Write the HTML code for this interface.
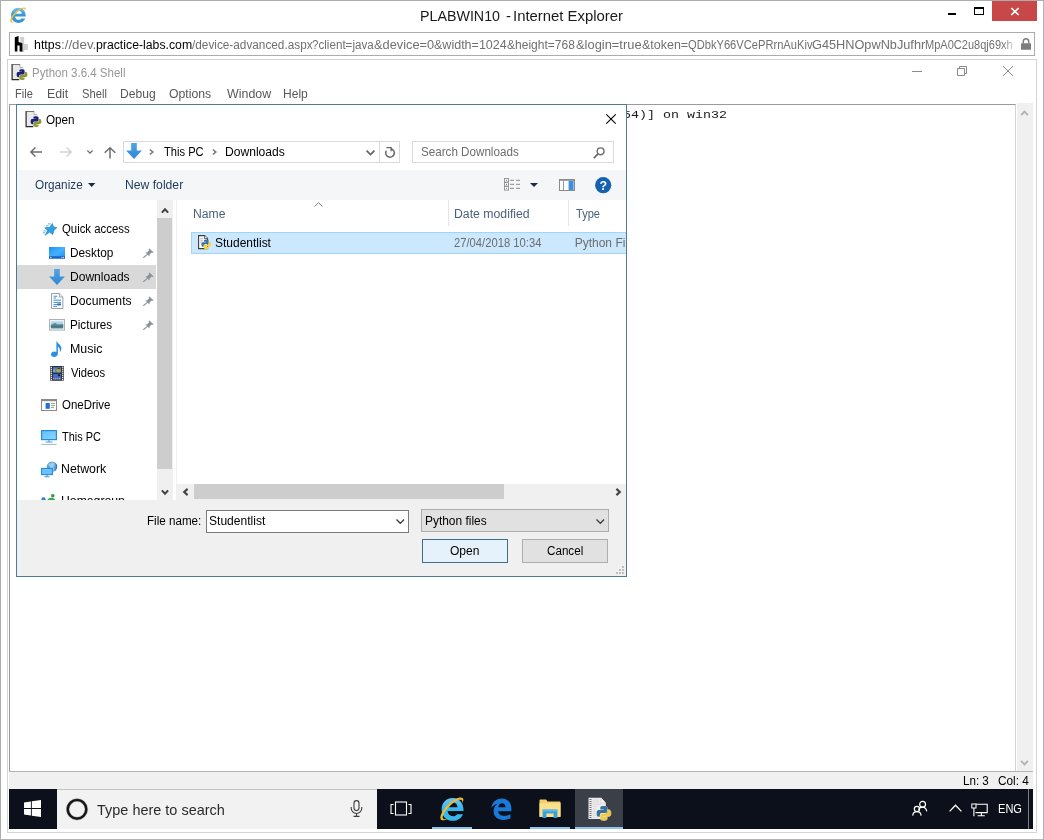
<!DOCTYPE html>
<html>
<head>
<meta charset="utf-8">
<title>PLABWIN10 - Internet Explorer</title>
<style>
*{box-sizing:border-box;margin:0;padding:0}
html,body{width:1044px;height:840px;overflow:hidden;background:#fff}
body{position:relative;font-family:"Liberation Sans",sans-serif;font-size:12px;color:#000}
.a{position:absolute}
.t{position:absolute;white-space:nowrap;line-height:1;transform-origin:0 0}
.t b{font-weight:normal;color:#000}
.mono{font-family:"Liberation Mono",monospace}
svg{position:absolute;overflow:visible}
#root{left:0;top:0;width:1044px;height:840px;will-change:transform}
#outer{left:0;top:0;width:1044px;height:840px;border:1px solid #acacac;border-right:1px solid #b4b4b4;border-bottom:1px solid #b4b4b4;background:#fff}
#closebtn{left:992px;top:1px;width:45px;height:20px;background:#c8484a}
#urlbar{left:9px;top:32px;width:1026px;height:24px;border:1px solid #acacac;background:#fff}
#inner{left:7px;top:59px;width:1030px;height:774px;border:1px solid #d4d4d4;background:#fff}
#textarea{left:9px;top:104px;width:1007px;height:668px;border:1px solid #9a9a9a;border-right:1px solid #d4d4d4;border-bottom:1px solid #b4b4b4;background:#fff}
#vscroll{left:1017px;top:103px;width:16px;height:668px;background:#f0f0f0}
#status{left:9px;top:771px;width:1024px;height:18px;background:#f0f0f0;border-top:1px solid #b4b4b4}
#taskbar{left:9px;top:789px;width:1024px;height:40px;background:#0b101a}
#search{left:57px;top:789px;width:320px;height:40px;background:#f2f2f2;border-top:1px solid #c2c2c2}
#pyactive{left:575px;top:789px;width:48px;height:40px;background:#3a3f48}
.ul{top:827px;height:2px;background:#8fc4ee}
#dlgwrap{left:16px;top:104px;width:611px;height:473px;overflow:hidden}
#dlgin{left:-16px;top:-104px;width:1044px;height:840px}
#dlgbg{left:16px;top:104px;width:611px;height:473px;border:1px solid #4d7b93;background:#fff}
#toolbar{left:17px;top:170px;width:609px;height:30px;background:#f5f6f7}
#addr{left:123px;top:141px;width:277px;height:22px;border:1px solid #d9d9d9;background:#fff}
#addrsep{left:379px;top:142px;width:1px;height:20px;background:#d9d9d9}
#sbox{left:412px;top:141px;width:202px;height:22px;border:1px solid #d9d9d9;background:#fff}
#sidesel{left:17px;top:265px;width:139px;height:24px;background:#d9d9d9}
#sscroll{left:157px;top:200px;width:16px;height:300px;background:#f0f0f0}
#sthumb{left:157px;top:218px;width:15px;height:251px;background:#cdcdcd}
#sline{left:175.6px;top:200px;width:1.4px;height:300px;background:#f0f0f0}
#hscroll{left:177px;top:484px;width:449px;height:16px;background:#f0f0f0}
#hthumb{left:194px;top:484px;width:310px;height:15px;background:#cdcdcd}
.colsep{top:200px;width:1px;height:26px;background:#e5e5e5}
#rowsel{left:191px;top:232px;width:440px;height:22px;background:#cce8ff;border:1px solid #a4d4fa}
#dlgbottom{left:17px;top:500px;width:609px;height:76px;background:#f0f0f0}
#fninput{left:206px;top:510px;width:203px;height:23px;border:1px solid #7a7a7a;background:#fff}
#ftcombo{left:421px;top:509px;width:188px;height:23px;border:1px solid #adadad;background:#e1e1e1}
#openbtn{left:422px;top:539px;width:86px;height:24px;border:1px solid #3f6f8f;background:#e5f1fb}
#cancelbtn{left:522px;top:539px;width:86px;height:24px;border:1px solid #adadad;background:#e1e1e1}
</style>
</head>
<body>
<div id="root" class="a">
<div id="outer" class="a"></div>
<div id="closebtn" class="a"></div>
<div id="urlbar" class="a"></div>
<div id="inner" class="a"></div>
<div id="textarea" class="a"></div>
<div id="vscroll" class="a"></div>
<div id="status" class="a"></div>
<div id="taskbar" class="a"></div>
<div id="search" class="a"></div>
<div id="pyactive" class="a"></div>
<div class="a ul" style="left:432px;width:40px"></div>
<div class="a ul" style="left:530px;width:40px"></div>
<div class="a ul" style="left:575px;width:48px"></div>
<div class="a" style="left:1028px;top:789px;width:1px;height:40px;background:#7b7f86"></div>
<svg style="left:10px;top:7px" width="16" height="16" viewBox="0 0 16 16" ><defs><linearGradient id="ieg16" x1="0" y1="0" x2="0" y2="1"><stop offset="0" stop-color="#6cc4f2"/><stop offset=".5" stop-color="#3596d8"/><stop offset="1" stop-color="#3596d8"/></linearGradient></defs><g transform="scale(1.0)">
<g transform="translate(8.4,8.3) scale(1.38) translate(-8.2,-8.1)"><path d="M8.3,2.6 C5.2,2.6 2.9,4.9 2.9,8.1 C2.9,11.3 5.1,13.6 8.3,13.6 C10.6,13.6 12.4,12.4 13.2,10.4 H10.4 C10,11 9.3,11.4 8.4,11.4 C6.9,11.4 5.9,10.4 5.8,8.9 H13.5 C13.6,5.3 11.6,2.6 8.3,2.6Z M5.9,7 C6.1,5.7 7,4.8 8.3,4.8 C9.6,4.8 10.5,5.7 10.6,7Z" fill="url(#ieg16)"/></g>
<g transform="translate(8,8) scale(1.1) translate(-8,-8)"><path d="M14.6,1.5 C13.2,0.3 9.2,1.6 5.2,5.8 C1.6,9.6 0.2,13.2 1.4,14.5 C2.2,15.3 4,14.8 5.6,13.7 C4,14.3 2.9,14.3 2.5,13.6 C1.9,12.5 3.4,9.6 6.2,6.8 C9.4,3.4 12.6,1.9 13.8,2.6 C14.3,2.9 14.4,3.6 14.1,4.5 C14.9,3.2 15.2,2.1 14.6,1.5Z" fill="#e6c040"/></g>
</g></svg>
<div class="a" style="left:948px;top:13px;width:8px;height:2px;background:#000"></div>
<div class="a" style="left:974px;top:7px;width:10px;height:8px;border:1px solid #000;border-top-width:2px"></div>
<svg style="left:1011px;top:8px" width="8" height="7" viewBox="0 0 8 7" ><path d="M0.3,0 L7.7,7 M7.7,0 L0.3,7" stroke="#fff" stroke-width="1.7" fill="none"/></svg>
<svg style="left:14px;top:36px" width="14" height="16" viewBox="0 0 14 16" ><path d="M6.2,1 H10.2 V16 H6.2Z M10.2,8 H13.8 V14 H10.2Z" fill="#cfcfcf"/><path d="M0.8,1.2 L4.6,0 V6 L8.4,7.2 V15.6 H5.6 V9.6 H3.4 V15.6 H0.8Z" fill="#000"/></svg>
<svg style="left:1021px;top:38px" width="10" height="12" viewBox="0 0 10 12" ><path d="M2.3,5.5 V3.6 A2.7,2.9 0 0 1 7.7,3.6 V5.5" fill="none" stroke="#7d7d7d" stroke-width="1.5"/><rect x="0" y="5.2" width="10" height="6.6" rx=".6" fill="#7d7d7d"/></svg>
<svg style="left:11px;top:64px" width="17" height="17" viewBox="0 0 17 17" ><path d="M1.2,0.3 H9 L12.3,3.6 V15.6 H1.2Z" fill="#e9e9ec"/>
<path d="M9,0.3 V3.6 H12.3" fill="#fafafa" stroke="#9a9aa0" stroke-width=".7"/>
<path d="M1.1,0 V15.6 H8.2" fill="none" stroke="#262626" stroke-width="1.2"/>
<path d="M1.2,0.5 H9" fill="none" stroke="#555" stroke-width=".8"/>
<g transform="translate(5.6,5.2) scale(1.08)"><path d="M4.9,0 C2.4,0 2.6,1.1 2.6,1.1 V2.3 H5 V2.7 H1.6 C1.6,2.7 0,2.5 0,5 C0,7.5 1.4,7.4 1.4,7.4 H2.3 V6.2 C2.3,6.2 2.2,4.8 3.7,4.8 H6.1 C6.1,4.8 7.4,4.8 7.4,3.5 V1.3 C7.4,1.3 7.6,0 4.9,0Z" fill="#1c1f7c"/><path d="M5.1,10 C7.6,10 7.4,8.9 7.4,8.9 V7.7 H5 V7.3 H8.4 C8.4,7.3 10,7.5 10,5 C10,2.5 8.6,2.6 8.6,2.6 H7.7 V3.8 C7.7,3.8 7.8,5.2 6.3,5.2 H3.9 C3.9,5.2 2.6,5.2 2.6,6.5 V8.7 C2.6,8.7 2.4,10 5.1,10Z" fill="#8b992f"/></g></svg>
<div class="a" style="left:912px;top:71px;width:10px;height:1px;background:#8a8a8a"></div>
<svg style="left:957px;top:66px" width="10" height="10" viewBox="0 0 10 10" ><path d="M0.5,2.5 H7.5 V9.5 H0.5Z M2.5,2.5 V0.5 H9.5 V7.5 H7.5" fill="none" stroke="#8a8a8a" stroke-width="1"/></svg>
<svg style="left:1003px;top:66px" width="10" height="10" viewBox="0 0 10 10" ><path d="M0,0 L10,10 M10,0 L0,10" stroke="#8a8a8a" stroke-width="1" fill="none"/></svg>
<svg style="left:1020.3px;top:109.6px" width="9" height="6" viewBox="0 0 9 6" ><path d="M1.1,5.1 L4.5,1.7 L7.9,5.1" stroke="#b2b2b2" stroke-width="1.9" fill="none"/></svg>
<svg style="left:1020.3px;top:760.3px" width="9" height="6" viewBox="0 0 9 6" ><path d="M1.1,0.9 L4.5,4.3 L7.9,0.9" stroke="#b2b2b2" stroke-width="1.9" fill="none"/></svg>
<svg style="left:24px;top:800px" width="17" height="17" viewBox="0 0 17 17" ><path d="M0,2.4 L6.9,1.4 V8.1 H0Z M7.8,1.3 L17,0 V8.1 H7.8Z M0,8.9 H6.9 V15.6 L0,14.6Z M7.8,8.9 H17 V17 L7.8,15.7Z" fill="#fff"/></svg>
<svg style="left:66px;top:798.5px" width="22" height="22" viewBox="0 0 22 22" ><circle cx="11.05" cy="10.35" r="9.3" fill="none" stroke="#141414" stroke-width="2.6"/><circle cx="11.05" cy="10.35" r="10.7" fill="none" stroke="#777" stroke-width=".7" opacity=".55"/><circle cx="11.05" cy="10.35" r="7.9" fill="none" stroke="#777" stroke-width=".6" opacity=".5"/></svg>
<svg style="left:350px;top:800px" width="13" height="17" viewBox="0 0 13 17" ><rect x="4" y="0.6" width="5" height="10" rx="2.5" fill="none" stroke="#3c3c3c" stroke-width="1.1"/><path d="M1.2,7 V8.2 A5.3,5.3 0 0 0 11.8,8.2 V7 M6.5,13.5 V16.4 M3.5,16.4 H9.5" fill="none" stroke="#3c3c3c" stroke-width="1.1"/></svg>
<svg style="left:390px;top:801px" width="22" height="15" viewBox="0 0 22 15" ><rect x="5.5" y="1" width="11" height="13" fill="none" stroke="#fff" stroke-width="1.1"/><path d="M3.6,3.5 H1 V12.5 H3.6 M18.4,3.5 H21 V12.5 H18.4" fill="none" stroke="#fff" stroke-width="1.1"/></svg>
<svg style="left:440px;top:796.5px" width="24" height="24" viewBox="0 0 24 24" ><defs><linearGradient id="ieg24" x1="0" y1="0" x2="0" y2="1"><stop offset="0" stop-color="#6cc4f2"/><stop offset=".5" stop-color="#38b6ee"/><stop offset="1" stop-color="#38b6ee"/></linearGradient></defs><g transform="scale(1.5)">
<g transform="translate(8.4,8.3) scale(1.38) translate(-8.2,-8.1)"><path d="M8.3,2.6 C5.2,2.6 2.9,4.9 2.9,8.1 C2.9,11.3 5.1,13.6 8.3,13.6 C10.6,13.6 12.4,12.4 13.2,10.4 H10.4 C10,11 9.3,11.4 8.4,11.4 C6.9,11.4 5.9,10.4 5.8,8.9 H13.5 C13.6,5.3 11.6,2.6 8.3,2.6Z M5.9,7 C6.1,5.7 7,4.8 8.3,4.8 C9.6,4.8 10.5,5.7 10.6,7Z" fill="url(#ieg24)"/></g>
<g transform="translate(8,8) scale(1.1) translate(-8,-8)"><path d="M14.6,1.5 C13.2,0.3 9.2,1.6 5.2,5.8 C1.6,9.6 0.2,13.2 1.4,14.5 C2.2,15.3 4,14.8 5.6,13.7 C4,14.3 2.9,14.3 2.5,13.6 C1.9,12.5 3.4,9.6 6.2,6.8 C9.4,3.4 12.6,1.9 13.8,2.6 C14.3,2.9 14.4,3.6 14.1,4.5 C14.9,3.2 15.2,2.1 14.6,1.5Z" fill="#e8bd3a"/></g>
</g></svg>
<svg style="left:491px;top:798px" width="21" height="22" viewBox="0 0 21 22" ><path d="M0.3,10.2 C0.8,4.2 5.2,0.4 10.8,0.4 C16.6,0.4 20.6,4.6 20.4,11 V13.2 H7.2 C7.4,16.2 10,17.8 13.2,17.8 C15.6,17.8 17.6,17.2 19.4,16.2 V20.4 C17.4,21.4 15.2,21.9 12.6,21.9 C6.4,21.9 2.6,18.4 2.6,13 C2.6,9.8 4.2,7.2 6.8,5.8 C4,6.2 1.6,7.8 0.3,10.2Z M7.4,9.2 H14.4 C14.4,6.8 13.2,5.2 10.9,5.2 C8.8,5.2 7.6,6.9 7.4,9.2Z" fill="#1a7ad9"/></svg>
<svg style="left:539px;top:799px" width="22" height="20" viewBox="0 0 22 20" ><path d="M0.5,1.5 Q0.5,0.6 1.4,0.6 H7 L8.6,2.4 H20.6 Q21.5,2.4 21.5,3.3 V17.5 H0.5Z" fill="#f4cf6a"/><path d="M0.5,4.2 H21.5 V18 H0.5Z" fill="#fbe08c"/><path d="M3.6,10.6 H18.4 V19 H14.6 V14.4 H7.4 V19 H3.6Z" fill="#38a1dc"/><path d="M3.6,10.6 H18.4 V12.4 H3.6Z" fill="#5cbcee"/></svg>
<svg style="left:587.5px;top:797px" width="24" height="24" viewBox="0 0 24 24" ><path d="M0.5,0.7 H13 L17.8,6 V22.1 H0.5Z" fill="#ededee"/><path d="M13,0.7 V6 H17.8" fill="#fbfbfb" stroke="#c4c4c8" stroke-width=".6"/>
<rect x="1.5" y="2" width="2" height="1" fill="#707074"/><rect x="1.5" y="4" width="2" height="1" fill="#707074"/><rect x="1.5" y="6" width="2" height="1" fill="#707074"/><rect x="1.5" y="8" width="2" height="1" fill="#707074"/><rect x="1.5" y="10" width="2" height="1" fill="#707074"/><rect x="1.5" y="12" width="2" height="1" fill="#707074"/><rect x="1.5" y="14" width="2" height="1" fill="#707074"/><rect x="1.5" y="16" width="2" height="1" fill="#707074"/><rect x="1.5" y="18" width="2" height="1" fill="#707074"/><rect x="1.5" y="20" width="2" height="1" fill="#707074"/>
<path d="M4.6,3 H11 M4.6,5.2 H11 M4.6,7.4 H13 M4.6,9.6 H9 M4.6,11.8 H8 M4.6,14 H8 M4.6,16.2 H8 M4.6,18.4 H9 M4.6,20.4 H10" stroke="#d4d4d8" stroke-width=".8"/>
<g transform="translate(8.6,9.1) scale(1.43)" stroke="#f4f4ec" stroke-width=".45" paint-order="stroke"><path d="M4.9,0 C2.4,0 2.6,1.1 2.6,1.1 V2.3 H5 V2.7 H1.6 C1.6,2.7 0,2.5 0,5 C0,7.5 1.4,7.4 1.4,7.4 H2.3 V6.2 C2.3,6.2 2.2,4.8 3.7,4.8 H6.1 C6.1,4.8 7.4,4.8 7.4,3.5 V1.3 C7.4,1.3 7.6,0 4.9,0Z" fill="#35709f"/><path d="M5.1,10 C7.6,10 7.4,8.9 7.4,8.9 V7.7 H5 V7.3 H8.4 C8.4,7.3 10,7.5 10,5 C10,2.5 8.6,2.6 8.6,2.6 H7.7 V3.8 C7.7,3.8 7.8,5.2 6.3,5.2 H3.9 C3.9,5.2 2.6,5.2 2.6,6.5 V8.7 C2.6,8.7 2.4,10 5.1,10Z" fill="#f4cb45"/></g></svg>
<svg style="left:912px;top:800px" width="16" height="16" viewBox="0 0 16 16" ><circle cx="10.6" cy="4.2" r="2.9" fill="none" stroke="#fff" stroke-width="1.2"/><path d="M6.6,10 C7.4,7.8 9,7.2 10.6,7.2 C12.6,7.2 14.2,8.4 14.8,11.4" fill="none" stroke="#fff" stroke-width="1.2"/><circle cx="4.9" cy="9" r="2.6" fill="none" stroke="#fff" stroke-width="1.2"/><path d="M0.7,15.6 C1,12.6 2.8,11.7 4.9,11.7 C7,11.7 8.8,12.6 9.1,15.6" fill="none" stroke="#fff" stroke-width="1.2"/></svg>
<svg style="left:949px;top:804px" width="13" height="8" viewBox="0 0 13 8" ><path d="M0.6,7.4 L6.5,1.2 L12.4,7.4" fill="none" stroke="#fff" stroke-width="1.3"/></svg>
<svg style="left:971px;top:802.5px" width="18" height="14" viewBox="0 0 18 14" ><path d="M4.5,1.2 H16.2 V9.6 H4.5" fill="none" stroke="#fff" stroke-width="1.1"/><path d="M10.4,9.6 V12.6 M6.6,12.7 H13.8" stroke="#fff" stroke-width="1.1" fill="none"/><rect x="0.8" y="1" width="4.2" height="4" fill="#0b101a" stroke="#fff" stroke-width="1"/><path d="M2.9,5 V13.2" stroke="#fff" stroke-width="1.1"/></svg>
<div class="t" style="left:419.82px;top:8.30px;font-size:15px;color:#1a1a1a;transform:scaleX(0.9500);">PLABWIN10</div>
<div class="t" style="left:505.98px;top:8.30px;font-size:15px;color:#1a1a1a;">-</div>
<div class="t" style="left:512.82px;top:8.30px;font-size:15px;color:#1a1a1a;transform:scaleX(0.9918);">Internet Explorer</div>
<div class="t" style="left:33.66px;top:39.42px;font-size:12.5px;color:#000;transform:scaleX(0.9935);">https</div>
<div class="t" style="left:60.82px;top:39.42px;font-size:12.5px;color:#707070;transform:scaleX(1.0639);">://dev.</div>
<div class="t" style="left:95.82px;top:39.42px;font-size:12.5px;color:#000;transform:scaleX(0.9813);">practice-labs.com</div>
<div class="t" style="left:191.51px;top:39.42px;font-size:12.5px;color:#707070;transform:scaleX(0.9432);">/device-advanced.aspx</div>
<div class="t" style="left:312.40px;top:39.42px;font-size:12.5px;color:#707070;transform:scaleX(0.9302);">?client=java</div>
<div class="t" style="left:373.72px;top:39.42px;font-size:12.5px;color:#707070;transform:scaleX(1.0233);">&amp;device=0</div>
<div class="t" style="left:433.56px;top:39.42px;font-size:12.5px;color:#707070;transform:scaleX(1.0016);">&amp;width=1024</div>
<div class="t" style="left:507.35px;top:39.42px;font-size:12.5px;color:#707070;transform:scaleX(0.9615);">&amp;height=768</div>
<div class="t" style="left:575.72px;top:39.42px;font-size:12.5px;color:#707070;transform:scaleX(1.0314);">&amp;login=true</div>
<div class="t" style="left:641.72px;top:39.42px;font-size:12.5px;color:#707070;transform:scaleX(0.9982);">&amp;token=</div>
<div class="t" style="left:688.08px;top:39.42px;font-size:12.5px;color:#707070;transform:scaleX(0.8912);">QDbkY66VCePRrnAuKiv</div>
<div class="t" style="left:812.08px;top:39.42px;font-size:12.5px;color:#707070;transform:scaleX(1.0187);">G45HNOpwNbJufhr</div>
<div class="t" style="left:925.08px;top:39.42px;font-size:12.5px;color:#707070;transform:scaleX(0.8827);">MpA0C2u8qj69xh</div>
<div class="t" style="left:32.03px;top:66.84px;font-size:12px;color:#979797;transform:scaleX(0.9596);">Python 3.6.4 Shell</div>
<div class="t" style="left:15.08px;top:87.84px;font-size:12px;color:#585858;transform:scaleX(0.9200);">File</div>
<div class="t" style="left:47.08px;top:87.84px;font-size:12px;color:#585858;transform:scaleX(1.0272);">Edit</div>
<div class="t" style="left:81.66px;top:87.84px;font-size:12px;color:#585858;transform:scaleX(0.9317);">Shell</div>
<div class="t" style="left:120.29px;top:87.84px;font-size:12px;color:#585858;transform:scaleX(1.0080);">Debug</div>
<div class="t" style="left:169.29px;top:87.84px;font-size:12px;color:#585858;transform:scaleX(1.0204);">Options</div>
<div class="t" style="left:226.51px;top:87.84px;font-size:12px;color:#585858;transform:scaleX(1.0345);">Window</div>
<div class="t" style="left:283.45px;top:87.84px;font-size:12px;color:#585858;transform:scaleX(1.0044);">Help</div>
<div class="t mono" style="left:623.30px;top:110.10px;font-size:11.7px;color:#1a1a1a;transform:scaleX(1.14);">54)] on win32</div>
<div class="t" style="left:962.61px;top:774.84px;font-size:12px;color:#000;transform:scaleX(0.9679);">Ln: 3</div>
<div class="t" style="left:997.82px;top:774.84px;font-size:12px;color:#000;transform:scaleX(0.9852);">Col: 4</div>
<div class="t" style="left:96.77px;top:802.30px;font-size:15px;color:#2b2b2b;transform:scaleX(0.9643);">Type here to search</div>
<div class="t" style="left:997.82px;top:802.84px;font-size:12px;color:#fff;transform:scaleX(0.9215);">ENG</div>
<div class="a" style="left:1002px;top:35px;width:15px;height:19px;background:linear-gradient(to right,rgba(255,255,255,0),rgba(255,255,255,.95))"></div>
<div id="dlgwrap" class="a"><div id="dlgin" class="a">
<div id="dlgbg" class="a"></div>
<div id="toolbar" class="a"></div>
<div id="addr" class="a"></div>
<div id="addrsep" class="a"></div>
<div id="sbox" class="a"></div>
<div id="sidesel" class="a"></div>
<div id="sscroll" class="a"></div>
<div id="sthumb" class="a"></div>
<div id="sline" class="a"></div>
<div id="hscroll" class="a"></div>
<div id="hthumb" class="a"></div>
<div class="a colsep" style="left:448px"></div>
<div class="a colsep" style="left:568px"></div>
<div id="rowsel" class="a"></div>
<svg style="left:25px;top:111px" width="17" height="17" viewBox="0 0 17 17" ><path d="M1.2,0.3 H9 L12.3,3.6 V15.6 H1.2Z" fill="#e9e9ec"/>
<path d="M9,0.3 V3.6 H12.3" fill="#fafafa" stroke="#9a9aa0" stroke-width=".7"/>
<path d="M1.1,0 V15.6 H8.2" fill="none" stroke="#262626" stroke-width="1.2"/>
<path d="M1.2,0.5 H9" fill="none" stroke="#555" stroke-width=".8"/>
<g transform="translate(5.6,5.2) scale(1.08)"><path d="M4.9,0 C2.4,0 2.6,1.1 2.6,1.1 V2.3 H5 V2.7 H1.6 C1.6,2.7 0,2.5 0,5 C0,7.5 1.4,7.4 1.4,7.4 H2.3 V6.2 C2.3,6.2 2.2,4.8 3.7,4.8 H6.1 C6.1,4.8 7.4,4.8 7.4,3.5 V1.3 C7.4,1.3 7.6,0 4.9,0Z" fill="#1c1f7c"/><path d="M5.1,10 C7.6,10 7.4,8.9 7.4,8.9 V7.7 H5 V7.3 H8.4 C8.4,7.3 10,7.5 10,5 C10,2.5 8.6,2.6 8.6,2.6 H7.7 V3.8 C7.7,3.8 7.8,5.2 6.3,5.2 H3.9 C3.9,5.2 2.6,5.2 2.6,6.5 V8.7 C2.6,8.7 2.4,10 5.1,10Z" fill="#8b992f"/></g></svg>
<svg style="left:606px;top:114px" width="10" height="10" viewBox="0 0 10 10" ><path d="M0.3,0.3 L9.7,9.7 M9.7,0.3 L0.3,9.7" stroke="#000" stroke-width="1.1" fill="none"/></svg>
<svg style="left:30px;top:147px" width="12" height="10" viewBox="0 0 12 10" ><path d="M5.4,0.5 L0.9,5 L5.4,9.5 M0.9,5 H12" fill="none" stroke="#6e6e6e" stroke-width="1.5"/></svg>
<svg style="left:59.5px;top:147px" width="12" height="10" viewBox="0 0 12 10" ><path d="M6.6,0.5 L11.1,5 L6.6,9.5 M11.1,5 H0" fill="none" stroke="#d2d2d2" stroke-width="1.5"/></svg>
<svg style="left:86.5px;top:149.5px" width="6" height="4" viewBox="0 0 6 4" ><path d="M0.4,0.5 L3,3.1 L5.6,0.5" fill="none" stroke="#6e6e6e" stroke-width="1.3"/></svg>
<svg style="left:104px;top:146.5px" width="12" height="12" viewBox="0 0 12 12" ><path d="M0.7,5.8 L6,0.8 L11.3,5.8 M6,0.8 V11.5" fill="none" stroke="#6e6e6e" stroke-width="1.5"/></svg>
<svg style="left:126px;top:143px" width="16" height="16" viewBox="0 0 16 16" ><defs><linearGradient id="dg" x1="0" y1="0" x2="0" y2="1"><stop offset="0" stop-color="#4ea5e8"/><stop offset="1" stop-color="#2f86d4"/></linearGradient></defs><path d="M5.2,0 H10.8 V7.4 H15.9 L8,15.9 L0.1,7.4 H5.2Z" fill="url(#dg)"/></svg>
<svg style="left:149px;top:149px" width="5" height="6" viewBox="0 0 5 6" ><path d="M0.8,0.5 L3.8,3 L0.8,5.5" fill="none" stroke="#777" stroke-width="1.6"/></svg>
<svg style="left:212px;top:149px" width="5" height="6" viewBox="0 0 5 6" ><path d="M0.8,0.5 L3.8,3 L0.8,5.5" fill="none" stroke="#777" stroke-width="1.6"/></svg>
<svg style="left:365.5px;top:150px" width="9" height="6" viewBox="0 0 9 6" ><path d="M0.6,0.7 L4.5,4.6 L8.4,0.7" fill="none" stroke="#666" stroke-width="1.7"/></svg>
<svg style="left:384px;top:146px" width="12" height="12" viewBox="0 0 12 12" ><path d="M7.1,2.75 A4.3,4.3 0 1 1 2.28,4.75" fill="none" stroke="#6a6a6a" stroke-width="1.5"/><path d="M2.4,1.6 H7.1 V5.2" fill="none" stroke="#6a6a6a" stroke-width="1.4"/></svg>
<svg style="left:593px;top:147px" width="12" height="12" viewBox="0 0 12 12" ><circle cx="7.6" cy="4.3" r="3.4" fill="none" stroke="#6a6a6a" stroke-width="1.4"/><path d="M5.1,6.8 L0.8,11.1" stroke="#6a6a6a" stroke-width="1.8"/></svg>
<svg style="left:88.2px;top:183px" width="7.4" height="4" viewBox="0 0 7.4 4" ><path d="M0,0 H7.4 L3.7,4Z" fill="#1e2a44"/></svg>
<svg style="left:529.5px;top:183px" width="8" height="4" viewBox="0 0 8 4" ><path d="M0,0 H8 L4,4Z" fill="#1e2a44"/></svg>
<svg style="left:504px;top:178.3px" width="17" height="13" viewBox="0 0 17 13" ><rect x="0.5" y="0.5" width="4" height="3.6" fill="#fff" stroke="#8f8f8f" stroke-width=".9"/><rect x="2" y="1.8" width="1" height="1" fill="#777"/><path d="M6,2.3 H10 M12,2.3 H16" stroke="#8a8a8a" stroke-width="1"/><rect x="0.5" y="4.5" width="4" height="3.6" fill="#fff" stroke="#8f8f8f" stroke-width=".9"/><rect x="2" y="5.8" width="1" height="1" fill="#777"/><path d="M6,6.3 H10 M12,6.3 H16" stroke="#8a8a8a" stroke-width="1"/><rect x="0.5" y="8.5" width="4" height="3.6" fill="#fff" stroke="#8f8f8f" stroke-width=".9"/><rect x="2" y="9.8" width="1" height="1" fill="#777"/><path d="M6,10.3 H10 M12,10.3 H16" stroke="#8a8a8a" stroke-width="1"/></svg>
<svg style="left:559px;top:179px" width="16" height="12" viewBox="0 0 16 12" ><rect x="0.5" y="0.5" width="15" height="11" fill="#fff" stroke="#8c8c8c"/><path d="M0,1 H16" stroke="#8c8c8c" stroke-width="1.6"/><path d="M4.5,1.5 V11" stroke="#9a9a9a" stroke-width="1"/><rect x="9.6" y="1.8" width="5" height="9.2" fill="#3f90dc"/></svg>
<svg style="left:595px;top:176.7px" width="16.4" height="16.4" viewBox="0 0 16.4 16.4" ><circle cx="8.2" cy="8.2" r="8.1" fill="#1762b0"/><text x="8.2" y="12.6" text-anchor="middle" font-family="Liberation Sans,sans-serif" font-weight="bold" font-size="12.5" fill="#fff">?</text></svg>
<svg style="left:314px;top:201.5px" width="9" height="5" viewBox="0 0 9 5" ><path d="M0.5,4.5 L4.5,0.7 L8.5,4.5" fill="none" stroke="#7a7a7a" stroke-width="1"/></svg>
<svg style="left:160.5px;top:206.5px" width="8" height="7" viewBox="0 0 8 7" ><path d="M0.9,5.6 L4,2.2 L7.1,5.6" fill="none" stroke="#444" stroke-width="2.1"/></svg>
<svg style="left:160.5px;top:488.5px" width="8" height="7" viewBox="0 0 8 7" ><path d="M0.9,1.4 L4,4.8 L7.1,1.4" fill="none" stroke="#444" stroke-width="2.1"/></svg>
<svg style="left:181.5px;top:487.5px" width="7" height="8" viewBox="0 0 7 8" ><path d="M5.6,0.9 L2.2,4 L5.6,7.1" fill="none" stroke="#444" stroke-width="2.1"/></svg>
<svg style="left:614.5px;top:487.5px" width="7" height="8" viewBox="0 0 7 8" ><path d="M1.4,0.9 L4.8,4 L1.4,7.1" fill="none" stroke="#444" stroke-width="2.1"/></svg>
<svg style="left:142.8px;top:248.4px" width="11" height="10" viewBox="0 0 11 10" ><path d="M6.2,0.3 L10.6,4.6 L9.4,5 L8.6,4.6 L6.6,6.6 L6.4,8.4 L2.4,4.4 L4.2,4.2 L6.2,2.2 L5.8,1.4Z" fill="#8a9299"/><path d="M4.4,6.4 L0.3,9.7" stroke="#8a9299" stroke-width="1.1"/></svg>
<svg style="left:142.8px;top:272.4px" width="11" height="10" viewBox="0 0 11 10" ><path d="M6.2,0.3 L10.6,4.6 L9.4,5 L8.6,4.6 L6.6,6.6 L6.4,8.4 L2.4,4.4 L4.2,4.2 L6.2,2.2 L5.8,1.4Z" fill="#8a9299"/><path d="M4.4,6.4 L0.3,9.7" stroke="#8a9299" stroke-width="1.1"/></svg>
<svg style="left:142.8px;top:296.4px" width="11" height="10" viewBox="0 0 11 10" ><path d="M6.2,0.3 L10.6,4.6 L9.4,5 L8.6,4.6 L6.6,6.6 L6.4,8.4 L2.4,4.4 L4.2,4.2 L6.2,2.2 L5.8,1.4Z" fill="#8a9299"/><path d="M4.4,6.4 L0.3,9.7" stroke="#8a9299" stroke-width="1.1"/></svg>
<svg style="left:142.8px;top:320.4px" width="11" height="10" viewBox="0 0 11 10" ><path d="M6.2,0.3 L10.6,4.6 L9.4,5 L8.6,4.6 L6.6,6.6 L6.4,8.4 L2.4,4.4 L4.2,4.2 L6.2,2.2 L5.8,1.4Z" fill="#8a9299"/><path d="M4.4,6.4 L0.3,9.7" stroke="#8a9299" stroke-width="1.1"/></svg>
<svg style="left:43px;top:222.5px" width="15" height="13" viewBox="0 0 15 13" ><path d="M9.4,0.4 L10.6,4 L13.9,4.7 L11,7.2 L9.8,11.5 L6.5,9.2 L2.1,12.3 L4.5,7.5 L1.8,4.8 L6.6,4.3Z" fill="#2f9fe4" stroke="#2b82c0" stroke-width=".6"/><path d="M4.8,0.9 H7.6 M2.8,2.9 H5.4 M0.4,7.9 H2.8 M0,9.8 H2" stroke="#5ab0e8" stroke-width="1"/></svg>
<svg style="left:49px;top:247.2px" width="16" height="11.6" viewBox="0 0 16 11.6" ><defs><linearGradient id="dk" x1="0" y1="0" x2="1" y2="1"><stop offset="0" stop-color="#1e8ff0"/><stop offset=".5" stop-color="#46b1ff"/><stop offset="1" stop-color="#1e8ff0"/></linearGradient></defs><rect x="0" y="0" width="16" height="11.6" fill="url(#dk)"/><rect x="0" y="9.2" width="16" height="2.4" fill="#1967c4"/><rect x="1.2" y="9.9" width="1.2" height="1" fill="#d7ecff"/><rect x="12.4" y="9.9" width="1" height="1" fill="#d7ecff"/><rect x="14" y="9.9" width="1" height="1" fill="#d7ecff"/></svg>
<svg style="left:49px;top:269.4px" width="16" height="16" viewBox="0 0 16 16" ><defs><linearGradient id="dg" x1="0" y1="0" x2="0" y2="1"><stop offset="0" stop-color="#4ea5e8"/><stop offset="1" stop-color="#2f86d4"/></linearGradient></defs><path d="M5.2,0 H10.8 V7.4 H15.9 L8,15.9 L0.1,7.4 H5.2Z" fill="url(#dg)"/></svg>
<svg style="left:51px;top:293px" width="12.4" height="16" viewBox="0 0 12.4 16" ><path d="M0.5,0.5 H8.4 L11.9,4 V15.5 H0.5Z" fill="#fff" stroke="#8d959e" stroke-width=".9"/><path d="M8.4,0.5 V4 H11.9" fill="#eef2f6" stroke="#8d959e" stroke-width=".8"/><path d="M2.6,3.2 H6.4 M2.6,5 H5 M2.4,7.2 H10 M2.4,9.4 H10 M2.4,11.6 H10 M2.4,13.4 H6" stroke="#3b8fd6" stroke-width="1"/><path d="M6.4,10.4 H10 V12.4 H6.4Z" fill="#2f6fb4"/></svg>
<svg style="left:49px;top:319.3px" width="16" height="11.6" viewBox="0 0 16 11.6" ><defs><linearGradient id="pc" x1="0" y1="0" x2="0" y2="1"><stop offset="0" stop-color="#cfe8f8"/><stop offset=".45" stop-color="#9cc6dc"/><stop offset=".55" stop-color="#4f7f8c"/><stop offset=".8" stop-color="#3d6b78"/><stop offset="1" stop-color="#a9c4cf"/></linearGradient></defs><rect x="0.5" y="0.5" width="15" height="10.6" fill="#f4f6f8" stroke="#aab2ba"/><rect x="1.8" y="1.8" width="12.4" height="8" fill="url(#pc)"/><path d="M1.8,6.2 L6,3.8 L9,5.8 L14.2,5 V7.6 H1.8Z" fill="#54808c" opacity=".8"/></svg>
<svg style="left:51px;top:341px" width="11.5" height="16" viewBox="0 0 11.5 16" ><path d="M5.6,0 C6.4,2.4 10.6,4 10.4,7.6 C10.3,9.2 9.6,10.6 8.6,11.4 C9.4,9.6 9.2,7.4 6.9,5.6 V12.6 C6.9,14.6 5.2,16 3.2,16 C1.4,16 0,15 0,13.5 C0,11.8 1.7,10.6 3.5,10.6 C4.2,10.6 4.9,10.8 5.4,11.1 V0Z" fill="#2b90e2"/></svg>
<svg style="left:50px;top:366px" width="14" height="14.7" viewBox="0 0 14 14.7" ><rect x="0" y="0" width="14" height="14.7" fill="#4c4c50"/><rect x="2.4" y="0.3" width="9.2" height="14.1" fill="#17233c"/><rect x="3" y="1.2" width="8" height="5.6" fill="#5a7ab6"/><rect x="3" y="7.8" width="8" height="5.8" fill="#4a68bc"/><ellipse cx="8.6" cy="4.4" rx="2.2" ry="1.9" fill="#a9ad35"/><rect x="7.6" y="2" width="2.4" height="1.2" fill="#4a3a2a"/><rect x="3.2" y="3.4" width="2" height="2.6" fill="#a8b0d8" opacity=".7"/><rect x="8" y="8.4" width="2" height="1.8" fill="#151c30"/><path d="M3.2,12.8 H10.8" stroke="#d6d6a0" stroke-width="1" stroke-dasharray="1.2 .8"/><rect x="0.7" y="0.8" width="1.2" height="1.1" fill="#fff"/><rect x="12.1" y="0.8" width="1.2" height="1.1" fill="#fff"/><rect x="0.7" y="2.8" width="1.2" height="1.1" fill="#fff"/><rect x="12.1" y="2.8" width="1.2" height="1.1" fill="#fff"/><rect x="0.7" y="4.8" width="1.2" height="1.1" fill="#fff"/><rect x="12.1" y="4.8" width="1.2" height="1.1" fill="#fff"/><rect x="0.7" y="6.8" width="1.2" height="1.1" fill="#fff"/><rect x="12.1" y="6.8" width="1.2" height="1.1" fill="#fff"/><rect x="0.7" y="8.8" width="1.2" height="1.1" fill="#fff"/><rect x="12.1" y="8.8" width="1.2" height="1.1" fill="#fff"/><rect x="0.7" y="10.8" width="1.2" height="1.1" fill="#fff"/><rect x="12.1" y="10.8" width="1.2" height="1.1" fill="#fff"/><rect x="0.7" y="12.8" width="1.2" height="1.1" fill="#fff"/><rect x="12.1" y="12.8" width="1.2" height="1.1" fill="#fff"/></svg>
<svg style="left:41px;top:399px" width="16" height="12" viewBox="0 0 16 12" ><rect x="0.5" y="0.5" width="15" height="11" fill="#fff" stroke="#8a8a8a"/><path d="M0,1.2 H16" stroke="#8a8a8a" stroke-width="2"/><rect x="4.6" y="4" width="4.2" height="5.8" fill="#1e6fcf"/><path d="M10,4.6 H14 M10,6.6 H14 M10,8.6 H13" stroke="#9a9a9a" stroke-width="1"/></svg>
<svg style="left:41px;top:430px" width="16" height="15" viewBox="0 0 16 15" ><defs><linearGradient id="tp" x1="0" y1="0" x2="1" y2="1"><stop offset="0" stop-color="#5cc0ff"/><stop offset="1" stop-color="#8fd6ff"/></linearGradient></defs><rect x="0.6" y="0.6" width="14.8" height="9" fill="url(#tp)" stroke="#2a8ad4" stroke-width="1.2"/><path d="M8,10 V11.8 M4.6,12 H11.4" stroke="#4a9ad8" stroke-width="1.1"/><path d="M0.4,14.4 H15.6" stroke="#aab6c0" stroke-width="1"/></svg>
<svg style="left:41px;top:461px" width="16" height="17" viewBox="0 0 16 17" ><circle cx="11" cy="5.6" r="5.2" fill="#5aa0d8"/><path d="M7.4,2.2 C9,3 10,2 11.4,1.2 C13.4,1.6 14.2,3.6 13,5 C12,6 13.6,7.6 12.6,9.6 C10,10.4 8.6,8 9.4,6 C8,5.4 7,4 7.4,2.2Z" fill="#a9d3ef" opacity=".85"/><path d="M14.4,1.8 A5.2,5.2 0 0 1 13.4,10.2 C15.4,8 15.4,4 14.4,1.8Z" fill="#2e6ea8"/><rect x="0.6" y="7.4" width="10.8" height="6.2" fill="#69c3ff" stroke="#2a8ad4" stroke-width="1.1"/><path d="M6,14 V15.4 M3.4,15.8 H8.6" stroke="#4a9ad8" stroke-width="1.1"/></svg>
<svg style="left:41px;top:493.5px" width="16" height="14" viewBox="0 0 16 14" ><circle cx="2.5" cy="5.4" r="2.1" fill="#2a7fd0"/><path d="M0,12 C0,8.4 5,8.4 5,12Z" fill="#2a7fd0"/><circle cx="11.8" cy="1.7" r="1.8" fill="#2f9a48"/><path d="M6,8 C6,2.4 14.6,2.4 14.6,8 V12 H6Z" fill="#3aa64a"/></svg>
<svg style="left:198px;top:235px" width="13" height="15" viewBox="0 0 13 15" ><path d="M0.6,0.6 H6.6 L9.6,3.6 V13.6 H0.6Z" fill="#fff" stroke="#3a3a3a" stroke-width="1.1"/><path d="M6.6,0.6 V3.6 H9.6" fill="#f1f1f1" stroke="#3a3a3a" stroke-width=".8"/><path d="M2.2,3.4 H5.4 M2.2,5.2 H5" stroke="#b0b0b0" stroke-width=".8"/><path d="M2.2,7 H4.6" stroke="#d88" stroke-width=".8"/><g transform="translate(3.4,4.6) scale(0.96)"><path d="M4.9,0 C2.4,0 2.6,1.1 2.6,1.1 V2.3 H5 V2.7 H1.6 C1.6,2.7 0,2.5 0,5 C0,7.5 1.4,7.4 1.4,7.4 H2.3 V6.2 C2.3,6.2 2.2,4.8 3.7,4.8 H6.1 C6.1,4.8 7.4,4.8 7.4,3.5 V1.3 C7.4,1.3 7.6,0 4.9,0Z" fill="#3572a5"/><path d="M5.1,10 C7.6,10 7.4,8.9 7.4,8.9 V7.7 H5 V7.3 H8.4 C8.4,7.3 10,7.5 10,5 C10,2.5 8.6,2.6 8.6,2.6 H7.7 V3.8 C7.7,3.8 7.8,5.2 6.3,5.2 H3.9 C3.9,5.2 2.6,5.2 2.6,6.5 V8.7 C2.6,8.7 2.4,10 5.1,10Z" fill="#ffd43b"/></g></svg>
<div class="t" style="left:46.03px;top:113.84px;font-size:12px;color:#000;transform:scaleX(0.9746);">Open</div>
<div class="t" style="left:163.72px;top:145.84px;font-size:12px;color:#000;transform:scaleX(0.9290);">This PC</div>
<div class="t" style="left:225.24px;top:145.84px;font-size:12px;color:#000;transform:scaleX(1.0078);">Downloads</div>
<div class="t" style="left:420.82px;top:145.84px;font-size:12px;color:#6d6d6d;transform:scaleX(0.9700);">Search Downloads</div>
<div class="t" style="left:34.82px;top:178.84px;font-size:12px;color:#1e395b;transform:scaleX(0.9791);">Organize</div>
<div class="t" style="left:125.29px;top:178.84px;font-size:12px;color:#1e395b;transform:scaleX(1.0146);">New folder</div>
<div class="t" style="left:62.40px;top:222.84px;font-size:12px;color:#000;transform:scaleX(0.9472);">Quick access</div>
<div class="t" style="left:69.61px;top:246.84px;font-size:12px;color:#000;transform:scaleX(0.9854);">Desktop</div>
<div class="t" style="left:69.61px;top:270.84px;font-size:12px;color:#000;transform:scaleX(1.0047);">Downloads</div>
<div class="t" style="left:69.61px;top:294.84px;font-size:12px;color:#000;transform:scaleX(1.0152);">Documents</div>
<div class="t" style="left:69.61px;top:318.84px;font-size:12px;color:#000;transform:scaleX(0.9721);">Pictures</div>
<div class="t" style="left:69.61px;top:342.84px;font-size:12px;color:#000;transform:scaleX(1.0333);">Music</div>
<div class="t" style="left:70.51px;top:366.84px;font-size:12px;color:#000;transform:scaleX(0.9348);">Videos</div>
<div class="t" style="left:62.40px;top:398.84px;font-size:12px;color:#000;transform:scaleX(0.9550);">OneDrive</div>
<div class="t" style="left:61.98px;top:430.84px;font-size:12px;color:#000;transform:scaleX(0.9098);">This PC</div>
<div class="t" style="left:61.08px;top:462.84px;font-size:12px;color:#000;transform:scaleX(1.0272);">Network</div>
<div class="t" style="left:61.08px;top:494.84px;font-size:12px;color:#000;transform:scaleX(1.0192);">Homegroup</div>
<div class="t" style="left:193.24px;top:207.84px;font-size:12px;color:#4c607a;transform:scaleX(1.0121);">Name</div>
<div class="t" style="left:454.29px;top:207.84px;font-size:12px;color:#4c607a;transform:scaleX(1.0223);">Date modified</div>
<div class="t" style="left:575.51px;top:207.84px;font-size:12px;color:#4c607a;transform:scaleX(0.9212);">Type</div>
<div class="t" style="left:214.82px;top:236.84px;font-size:12px;color:#000;transform:scaleX(0.9985);">Studentlist</div>
<div class="t" style="left:454.29px;top:236.84px;font-size:12px;color:#6d6d6d;transform:scaleX(0.9363);">27/04/2018 10:34</div>
<div class="t" style="left:574.70px;top:236.84px;font-size:12px;color:#6d6d6d;">Python File</div>
<div id="dlgbottom" class="a"></div>
<div id="fninput" class="a"></div>
<div id="ftcombo" class="a"></div>
<div id="openbtn" class="a"></div>
<div id="cancelbtn" class="a"></div>
<svg style="left:396px;top:519px" width="9" height="5" viewBox="0 0 9 5" ><path d="M0.5,0.5 L4.3,4.3 L8.1,0.5" fill="none" stroke="#3c3c3c" stroke-width="1.3"/></svg>
<svg style="left:596px;top:519px" width="9" height="5" viewBox="0 0 9 5" ><path d="M0.5,0.5 L4.3,4.3 L8.1,0.5" fill="none" stroke="#3c3c3c" stroke-width="1.3"/></svg>
<svg style="left:614px;top:566px" width="10" height="8" viewBox="0 0 10 8" ><rect x="8" y="0" width="2" height="2" fill="#bfbfbf"/><rect x="5" y="3" width="2" height="2" fill="#bfbfbf"/><rect x="8" y="3" width="2" height="2" fill="#bfbfbf"/><rect x="2" y="6" width="2" height="2" fill="#bfbfbf"/><rect x="5" y="6" width="2" height="2" fill="#bfbfbf"/><rect x="8" y="6" width="2" height="2" fill="#bfbfbf"/></svg>
<div class="t" style="left:146.82px;top:514.84px;font-size:12px;color:#000;transform:scaleX(0.9684);">File name:</div>
<div class="t" style="left:209.29px;top:514.84px;font-size:12px;color:#000;transform:scaleX(1.0049);">Studentlist</div>
<div class="t" style="left:424.66px;top:514.84px;font-size:12px;color:#000;transform:scaleX(0.9941);">Python files</div>
<div class="t" style="left:449.82px;top:544.84px;font-size:12px;color:#000;transform:scaleX(1.0037);">Open</div>
<div class="t" style="left:546.82px;top:544.84px;font-size:12px;color:#000;transform:scaleX(0.9702);">Cancel</div>
<div class="a" style="left:16px;top:104px;width:611px;height:473px;border:1px solid #4d7b93"></div>
</div></div>
</div>
</body>
</html>
